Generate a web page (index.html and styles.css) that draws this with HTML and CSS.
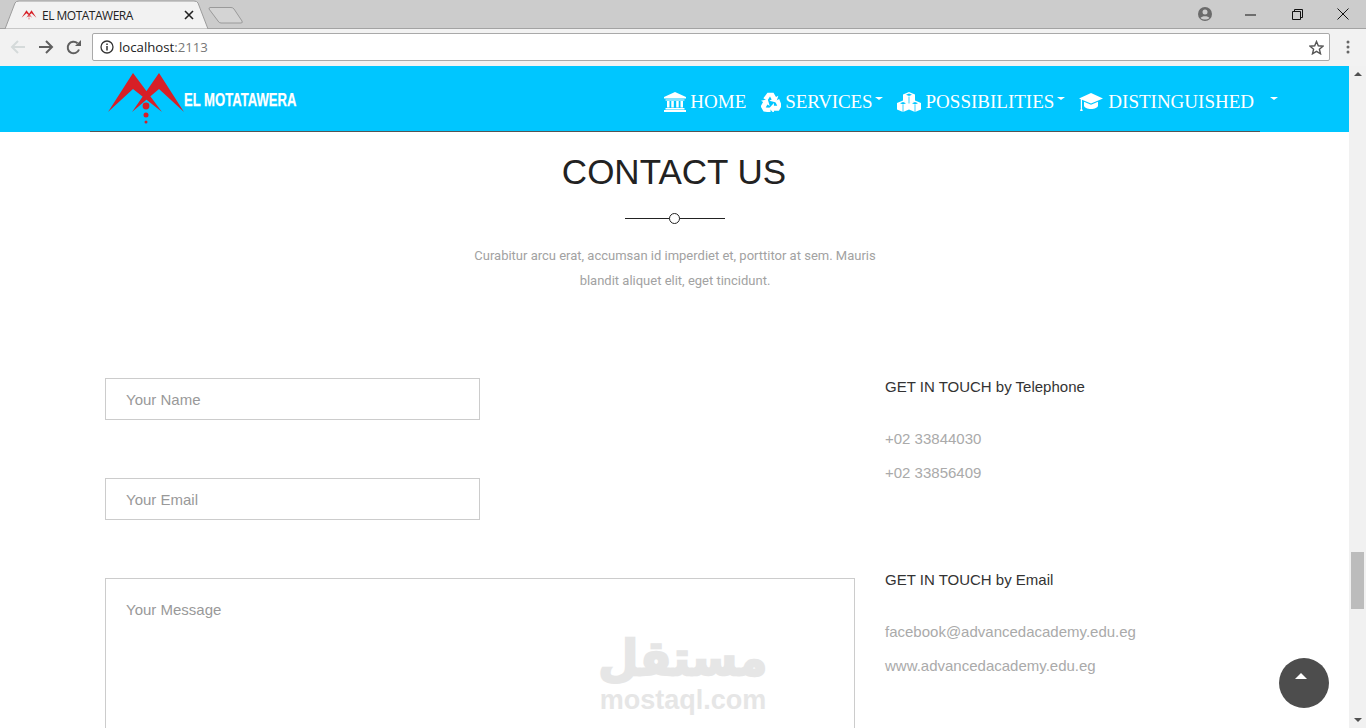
FILE: index.html
```html
<!DOCTYPE html>
<html lang="en">
<head>
<meta charset="utf-8">
<title>EL MOTATAWERA</title>
<link rel="stylesheet" href="styles.css">
</head>
<body>
<svg class="defs" width="0" height="0" aria-hidden="true">
  <defs>
    <symbol id="logo" viewBox="105 70 82 55">
      <path fill="#d71f26" d="M108 112 133 73 162 112 133 89ZM132 112 159 73 184 112 159 89Z"/>
      <circle fill="#d71f26" cx="146" cy="106" r="3.4"/>
      <circle fill="#d71f26" cx="146" cy="115" r="2.5"/>
      <circle fill="#d71f26" cx="146" cy="122" r="1.5"/>
    </symbol>
  </defs>
</svg>

<div class="browser">
  <div class="tabbar">
    <div class="tab">
      <svg class="tab-shape" width="212" height="29" viewBox="0 0 212 29"><path d="M5 29 15 3Q16 1 19 1H194Q197 1 198 3L208 29Z" fill="#f2f2f2" stroke="#9c9c9c"/></svg>
      <svg class="favicon" width="16" height="14"><use href="#logo"/></svg>
      <span class="tab-title">EL MOTATAWERA</span>
      <svg class="tab-close" width="10" height="10" viewBox="0 0 10 10"><path d="M1 1 9 9M9 1 1 9" stroke="#222" stroke-width="1.6"/></svg>
    </div>
    <svg class="newtab" width="36" height="18" viewBox="0 0 36 18"><path d="M2 1.500H23Q25 1.500 26 3L34 15Q35 17 33 17H13Q11 17 10 15L1 3Q1 1.500 2 1.500Z" fill="#d4d4d4" stroke="#9a9a9a"/></svg>
    <div class="winctl">
      <svg class="profile" width="16" height="16" viewBox="0 0 16 16"><circle cx="8" cy="8" r="7" fill="#6b6b6b"/><circle cx="8" cy="6" r="2.500" fill="#ccc"/><path d="M3.500 12C5 9.500 11 9.500 12.500 12 10 14 6 14 3.500 12Z" fill="#ccc"/></svg>
      <svg class="minimize" width="11" height="11" viewBox="0 0 11 11"><path d="M0 6H11" stroke="#111"/></svg>
      <svg class="restore" width="11" height="11" viewBox="0 0 11 11"><path d="M.5 2.500H8.500V10.500H.5ZM2.500 2.500V.5H10.500V8.500H8.500" fill="none" stroke="#111"/></svg>
      <svg class="close" width="12" height="12" viewBox="0 0 12 12"><path d="M.5.5 11.500 11.500M11.500.5.5 11.500" stroke="#111"/></svg>
    </div>
  </div>
  <div class="toolbar">
    <svg class="tool" width="16" height="14" viewBox="0 0 16 14"><path d="M15 7H2M8 1 2 7 8 13" fill="none" stroke="#d5dada" stroke-width="2"/></svg>
    <svg class="tool" width="16" height="14" viewBox="0 0 16 14"><path d="M1 7H14M8 1 14 7 8 13" fill="none" stroke="#5f5f5f" stroke-width="2"/></svg>
    <svg class="tool" width="15" height="15" viewBox="0 0 15 15"><path d="M13 9.500A5.800 5.800 0 1 1 11.500 3.300" fill="none" stroke="#5f5f5f" stroke-width="2"/><path d="M9 6H15V0Z" fill="#5f5f5f"/></svg>
    <div class="omnibox">
      <svg class="info" width="14" height="14" viewBox="0 0 14 14"><circle cx="7" cy="7" r="6" fill="none" stroke="#333" stroke-width="1.300"/><path d="M7 6V10.500M7 3.500V5" stroke="#333" stroke-width="1.500"/></svg>
      <span class="url">localhost<span class="port">:2113</span></span>
      <svg class="star" width="15" height="15" viewBox="0 0 15 15"><path d="M7.500 1.500 9.300 5.800 14 6.200 10.400 9.200 11.500 13.800 7.500 11.400 3.500 13.800 4.600 9.200 1 6.200 5.700 5.800Z" fill="none" stroke="#555" stroke-width="1.400"/></svg>
    </div>
    <svg class="dots" width="4" height="14" viewBox="0 0 4 14"><circle cx="2" cy="2" r="1.500" fill="#666"/><circle cx="2" cy="7" r="1.500" fill="#666"/><circle cx="2" cy="12" r="1.500" fill="#666"/></svg>
  </div>

  <div class="viewport">
    <div class="page">
      <header class="navbar">
        <div class="nav-inner">
          <a class="brand">
            <svg class="brand-logo" width="82" height="55"><use href="#logo"/></svg>
            <span class="brand-name">EL MOTATAWERA</span>
          </a>
          <nav class="menu">
            <a class="menu-item menu-home">
              <svg width="22" height="20" viewBox="0 0 22 20" fill="#fff"><path d="M11 0 22 5V6.500H0V5ZM1.500 7.500H20.500V8.500H1.500ZM3 9H5.500V15.500H3ZM7.300 9H9.800V15.500H7.300ZM12.200 9H14.700V15.500H12.200ZM16.500 9H19V15.500H16.500ZM1.500 16H20.500V17.500H1.500ZM0 18H22V20H0Z"/></svg>
              HOME
            </a>
            <a class="menu-item menu-services">
              <svg width="20" height="20" viewBox="0 0 24 24" fill="#fff"><g id="rc"><path d="M7.800.8H15L18 6 20.800 4.400 18.200 12.500 10 10.600 12.800 9 10.800 5.500 7.600 10.500 2.800 7.500Z"/></g><use href="#rc" transform="rotate(120 12 13.500)"/><use href="#rc" transform="rotate(240 12 13.500)"/></svg>
              SERVICES<i class="caret"></i>
            </a>
            <a class="menu-item">
              <svg width="24" height="20" viewBox="0 0 24 20"><g id="cube"><path d="M6 8.500 12 11V17.500L6 20 0 17.500V11Z" fill="#fff"/><path d="M3 11.200 6 10 9 11.200 6 12.400Z" fill="#00c6ff"/><path d="M6 13V20" stroke="#00c6ff" stroke-width=".8"/></g><use href="#cube" x="12"/><use href="#cube" x="6" y="-8.500"/></svg>
              POSSIBILITIES<i class="caret"></i>
            </a>
            <a class="menu-item">
              <svg width="24" height="18" viewBox="0 0 24 18" fill="#fff"><path d="M12 0 24 5.500 12 10.500 3 6.800V15H1.800V6.300L0 5.500ZM5 8.800 12 11.800 19 8.800V12.500C19 14.500 15.500 16 12 16S5 14.500 5 12.500Z"/><path d="M1 18 2.400 14 3.800 18Z"/></svg>
              DISTINGUISHED
            </a>
            <i class="caret caret-last"></i>
          </nav>
        </div>
      </header>

      <main class="contact">
        <h1 class="contact-title">CONTACT US</h1>
        <div class="divider"><span class="divider-dot"></span></div>
        <p class="contact-lead">Curabitur arcu erat, accumsan id imperdiet et, porttitor at sem. Mauris blandit aliquet elit, eget tincidunt.</p>
        <div class="contact-grid">
          <form class="contact-form">
            <input class="field field-short" type="text" placeholder="Your Name">
            <input class="field field-short" type="email" placeholder="Your Email">
            <textarea class="field field-area" placeholder="Your Message"></textarea>
          </form>
          <aside class="contact-info">
            <section class="info-block">
              <h2 class="info-title">GET IN TOUCH by Telephone</h2>
              <p class="info-line">+02 33844030</p>
              <p class="info-line">+02 33856409</p>
            </section>
            <section class="info-block">
              <h2 class="info-title">GET IN TOUCH by Email</h2>
              <p class="info-line">facebook@advancedacademy.edu.eg</p>
              <p class="info-line">www.advancedacademy.edu.eg</p>
            </section>
          </aside>
        </div>
      </main>

      <div class="watermark">
        <span class="wm-ar" lang="ar" dir="rtl">مستقل</span>
        <span class="wm-en">mostaql.com</span>
      </div>
      <a class="to-top"><i class="to-top-arrow"></i></a>
    </div>
    <div class="scrollbar">
      <i class="sb-up"></i>
      <div class="sb-thumb"></div>
      <i class="sb-down"></i>
    </div>
  </div>
</div>
</body>
</html>
```

FILE: styles.css
```css
* { box-sizing: border-box; }
html, body { margin: 0; padding: 0; height: 100%; overflow: hidden; background: #fff; }
body { font-family: "Liberation Sans", Arial, sans-serif; }
.defs { position: absolute; }

.browser { display: flex; flex-direction: column; width: 1366px; height: 728px; overflow: hidden; }

/* tab strip */
.tabbar { display: flex; align-items: flex-start; height: 29px; background: #cccccc; border-bottom: 1px solid #a3a3a3; flex: none; }
.tab { position: relative; display: flex; align-items: center; width: 212px; height: 29px; padding: 1px 0 0 21px; flex: none; }
.tab-shape { position: absolute; left: 0; top: 0; }
.favicon, .tab-title, .tab-close { position: relative; }
.tab-title { margin-left: 5px; width: 142px; font: 12px "Open Sans", sans-serif; letter-spacing: -.5px; color: #222; white-space: nowrap; }
.newtab { margin: 6px 0 0 -4px; }
.winctl { display: flex; align-items: center; height: 28px; margin-left: auto; padding-right: 17px; }
.winctl .profile { margin-right: 32px; }
.winctl .minimize { margin-right: 36px; }
.winctl .restore { margin-right: 34px; }

/* toolbar */
.toolbar { display: flex; align-items: center; height: 37px; padding: 0 15px 1px 10px; background: #f2f2f2; flex: none; }
.tool { margin-right: 12px; flex: none; }
.omnibox { display: flex; align-items: center; width: 1238px; height: 28px; margin-left: -1px; padding: 0 5px 0 7px; background: #fff; border: 1px solid #a9a9a9; border-radius: 2px; }
.info { flex: none; }
.url { margin-left: 5px; font: 13.2px "Open Sans", sans-serif; color: #222; }
.port { color: #777; }
.star { margin-left: auto; }
.dots { margin-left: 16px; }

/* page */
.viewport { display: flex; flex: 1; min-height: 0; }
.page { position: relative; flex: 1; min-width: 0; overflow: hidden; background: #fff; }

.navbar { height: 66px; background: #00c6ff; }
.nav-inner { display: flex; justify-content: space-between; width: 1170px; height: 66px; margin-left: 90px; padding-left: 15px; border-bottom: 1px solid #555; }
.brand { display: flex; align-items: flex-start; padding-top: 4px; }
.brand-logo { flex: none; }
.brand-name { margin: 20px 0 0 -3px; font: bold 18px "Liberation Sans", sans-serif; color: #fff; white-space: nowrap; transform: scaleX(.727); transform-origin: left center; -webkit-text-stroke: .25px #fff; }
.menu { display: flex; align-items: center; margin-right: -18px; padding-top: 6px; }
.menu-item { display: flex; align-items: center; margin-right: 14px; font: 19px "Liberation Serif", "Times New Roman", serif; color: #fff; white-space: nowrap; }
.menu-item svg { margin-right: 5px; flex: none; }
.menu-home { margin-right: 15px; }
.menu-home svg, .menu-services svg { margin-right: 4px; }
.menu-services { letter-spacing: -.12px; }
.menu-services .caret { margin-left: 2px; }
.caret { display: block; width: 0; height: 0; margin: -6px 0 0 3px; border-style: solid; border-width: 3px 4px 0; border-color: #fff transparent transparent; }
.caret-last { margin: -6px 0 0 2px; }

/* contact section */
.contact { padding: 0 0 0 90px; width: 1170px; margin-left: 0; box-sizing: content-box; }
.contact-title { margin: 19px 0 0; padding-right: 2px; font-size: 35px; font-weight: 400; line-height: 42px; text-align: center; color: #222; }
.divider { position: relative; width: 100px; height: 1px; margin: 25px auto 0; background: #222; }
.divider-dot { position: absolute; left: 44px; top: -5px; width: 11px; height: 11px; background: #fff; border: 1px solid #222; border-radius: 50%; }
.contact-lead { width: 420px; margin: 24px auto 0; font: 400 13px/25px Roboto, sans-serif; text-align: center; color: #a2a2a2; }
.contact-grid { display: grid; grid-template-columns: 780px 390px; margin-top: 85px; }
.contact-form { display: flex; flex-direction: column; align-items: flex-start; gap: 58px; padding: 0 15px; }
.field { display: block; padding: 0 20px; font: 15px "Liberation Sans", Arial, sans-serif; color: #555; background: #fff; border: 1px solid #ccc; border-radius: 0; outline: 0; resize: none; }
.field::placeholder { color: #999; opacity: 1; }
.field-short { width: 375px; height: 42px; }
.field-area { width: 750px; height: 220px; padding-top: 22px; }
.contact-info { margin-top: -1px; padding: 0 15px; }
.info-block { height: 193px; }
.info-title { margin: 0 0 25px; font-size: 15px; font-weight: 400; line-height: 20px; color: #333; }
.info-line { margin: 0; font-size: 15px; line-height: 34px; color: #aaa; }

/* overlays */
.watermark { position: absolute; left: 590px; top: 571px; display: flex; flex-direction: column; align-items: center; width: 186px; color: #e6e6e6; font-weight: 700; pointer-events: none; }
.wm-ar { font: bold 42px/51px "DejaVu Sans", sans-serif; -webkit-text-stroke: 2px #e6e6e6; transform: scale(1.1, 1.15); transform-origin: center bottom; }
.wm-en { font: bold 27px/24px "Liberation Sans", sans-serif; }
.to-top { position: absolute; left: 1279px; top: 592px; width: 50px; height: 50px; background: #4d4d4d; border-radius: 50%; }
.to-top-arrow { position: absolute; left: 16px; top: 15px; width: 0; height: 0; border-style: solid; border-width: 0 6px 6px; border-color: transparent transparent #fff; }

/* scrollbar */
.scrollbar { display: flex; flex-direction: column; align-items: center; width: 17px; background: #f1f1f1; flex: none; }
.sb-up, .sb-down { display: block; width: 0; height: 0; border-style: solid; border-color: transparent; }
.sb-up { margin-top: 6px; border-width: 0 4px 4px; border-bottom-color: #505050; }
.sb-thumb { width: 13px; height: 57px; margin-top: 476px; background: #bcbcbc; }
.sb-down { margin-top: auto; margin-bottom: 6px; border-width: 4px 4px 0; border-top-color: #505050; }
```
